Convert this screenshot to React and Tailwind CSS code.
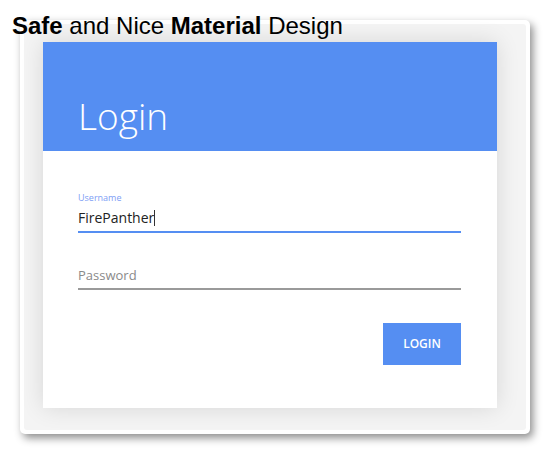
export default function App() {
  return (
    <div className="relative w-[550px] h-[455px] bg-white overflow-hidden">
      <div className="absolute left-[12px] top-[12px] z-10 text-[24px] leading-[28px] text-black" style={{ fontFamily: '"Liberation Sans", Arial, sans-serif' }}>
        <span className="font-bold">Safe</span> and Nice <span className="font-bold">Material</span> Design
      </div>
      <div className="ml-[20px] mt-[20px] w-[510px] h-[414px] rounded-[5px] bg-white shadow-[3px_4px_8px_rgba(0,0,0,0.45)] p-[4px]">
        <div className="w-full h-full rounded-[3px] bg-[#f4f4f4] pl-[19px] pt-[18px]">
          <div className="w-[454px] h-[366px] bg-white shadow-[0_0_22px_rgba(0,0,0,0.12)] flex flex-col" style={{ fontFamily: '"Open Sans", sans-serif' }}>
            <div className="h-[109px] bg-[#558ef2] flex items-end pl-[35px] pb-[10px]">
              <div className="text-white text-[37px] font-light leading-[50px]">Login</div>
            </div>
            <div className="px-[35px] pt-[41px] flex flex-col">
              <div className="text-[9px] leading-[12px] text-[#7d9ef5]">Username</div>
              <div className="mt-[5px] text-[14px] leading-[18px] text-[#222] flex items-center">
                FirePanther<span className="inline-block w-[1px] h-[16px] bg-[#333]"></span>
              </div>
              <div className="mt-[4px] h-[2px] bg-[#558ef2] w-[383px]"></div>
              <div className="mt-[33px] text-[13px] leading-[18px] text-[#8a8a8a]">Password</div>
              <div className="mt-[4px] h-[2px] bg-[#9a9a9a] w-[383px]"></div>
              <div className="mt-[33px] flex justify-end w-[383px]">
                <div className="w-[78px] h-[42px] bg-[#558ef2] text-white text-[12px] font-semibold flex items-center justify-center">LOGIN</div>
              </div>
            </div>
          </div>
        </div>
      </div>
    </div>
  );
}
